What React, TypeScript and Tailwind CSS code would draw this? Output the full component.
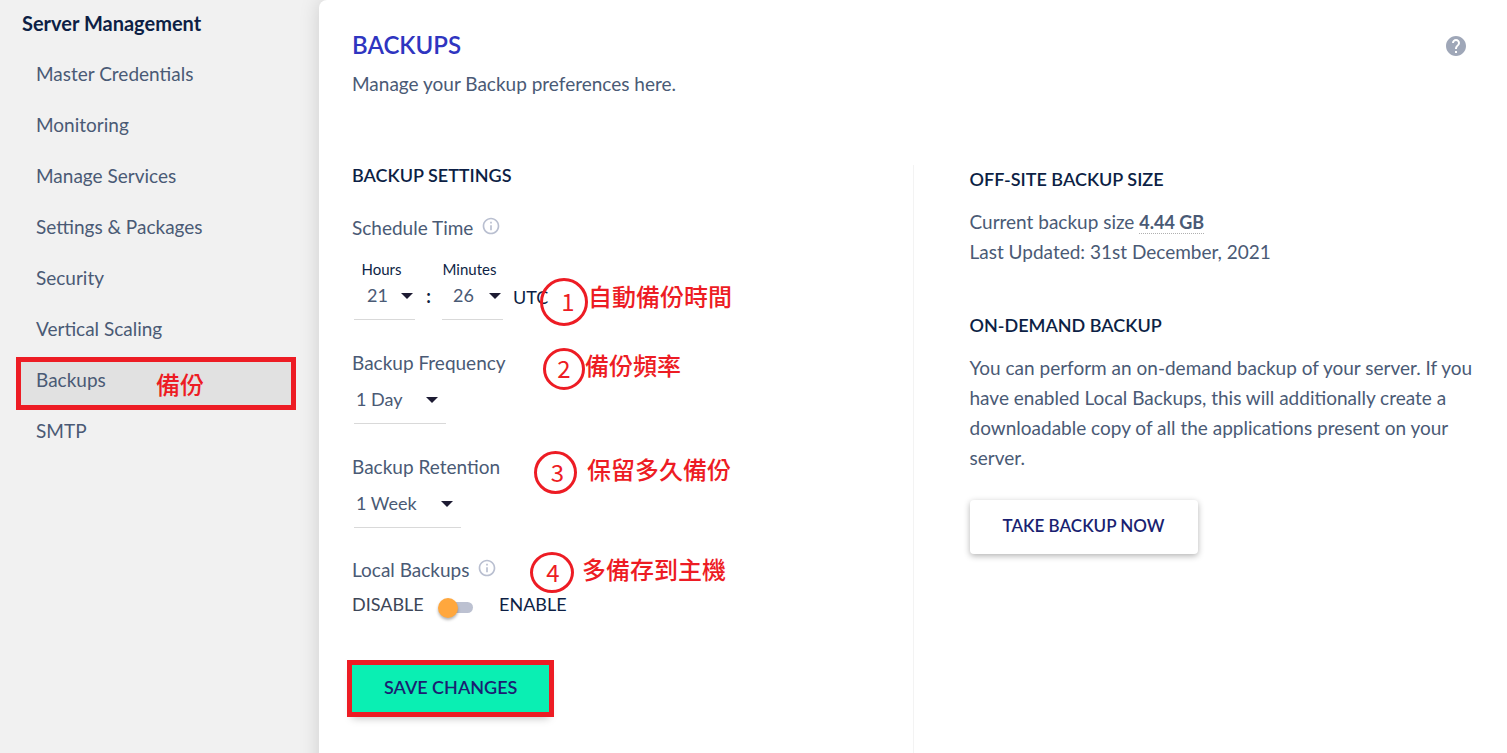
import { useState, type ReactNode } from 'react';
import { MdHelp, MdInfoOutline } from 'react-icons/md';

const navItems = [
  'Master Credentials',
  'Monitoring',
  'Manage Services',
  'Settings & Packages',
  'Security',
  'Vertical Scaling',
  'Backups',
  'SMTP',
];

const range = (n: number) => Array.from({ length: n }, (_, i) => String(i).padStart(2, '0'));

interface SelectBoxProps {
  id: string;
  options: string[];
  initial: string;
  className: string;
  arrowClassName: string;
}

const SelectBox = ({ id, options, initial, className, arrowClassName }: SelectBoxProps) => {
  const [value, setValue] = useState(initial);

  return (
    <div className="relative w-fit">
      <select
        id={id}
        value={value}
        onChange={(e) => setValue(e.target.value)}
        className={`block h-[41px] appearance-none border-b border-[#d9d9d9] bg-transparent pb-2 text-lg text-[#4a5a75] outline-none ${className}`}
      >
        {options.map((option) => (
          <option key={option}>{option}</option>
        ))}
      </select>
      <svg
        viewBox="0 0 12 6"
        className={`pointer-events-none absolute top-[14px] h-[6px] w-3 ${arrowClassName}`}
        fill="#1d1b33"
      >
        <path d="M0 0h12L6 6z" />
      </svg>
    </div>
  );
};

interface NoteProps {
  digit: string;
  text: string;
  className: string;
  circleClassName: string;
  textClassName: string;
}

// red hand-drawn style marker placed over the form
const Note = ({ digit, text, className, circleClassName, textClassName }: NoteProps) => (
  <div
    className={`pointer-events-none absolute flex items-center whitespace-nowrap font-['Noto_Sans_CJK_TC',sans-serif] text-2xl text-[#ed1c24] ${className}`}
  >
    <span
      className={`flex items-center justify-center rounded-[50%] border-3 border-[#ed1c24] pb-[2px] ${circleClassName}`}
    >
      {digit}
    </span>
    <span className={`font-medium ${textClassName}`}>{text}</span>
  </div>
);

const SectionTitle = ({ children }: { children: ReactNode }) => (
  <h2 className="text-lg leading-5 font-semibold text-[#0d1f45]">{children}</h2>
);

const InfoLabel = ({ children }: { children: ReactNode }) => (
  <div className="flex items-start gap-2 leading-6">
    {children}
    <MdInfoOutline className="size-5 text-[#b9bfd0]" />
  </div>
);

const Sidebar = () => (
  <aside className="w-[319px] shrink-0">
    <h2 className="pt-[7px] pl-[22px] text-xl leading-8 font-bold text-[#0d1f45]">
      Server Management
    </h2>
    <nav className="mt-[10px]">
      <ul>
        {navItems.map((item) => (
          <li key={item} className="relative">
            {item === 'Backups' && (
              <div className="absolute top-[2px] right-[23px] left-4 h-[53px] border-5 border-[#ed1c24] bg-[#e1e1e1]">
                <span className="absolute top-1 left-[135px] font-['Noto_Sans_CJK_TC',sans-serif] text-2xl leading-9 font-medium text-[#ed1c24]">
                  備份
                </span>
              </div>
            )}
            <a href="#" className="relative flex h-[51px] items-center pl-9">
              {item}
            </a>
          </li>
        ))}
      </ul>
    </nav>
  </aside>
);

const BackupSettings = () => {
  const [local, setLocal] = useState(false);

  return (
    <section>
      <SectionTitle>BACKUP SETTINGS</SectionTitle>

      <div className="relative mt-[31px]">
        <InfoLabel>Schedule Time</InfoLabel>
        <div className="mt-[19px] ml-[2px] flex text-lg text-[#0d1f45]">
          <div>
            <label htmlFor="hours" className="block pr-[6px] text-center text-[15px] leading-5">
              Hours
            </label>
            <SelectBox
              id="hours"
              options={range(24)}
              initial="21"
              className="w-[61px] pl-[13px]"
              arrowClassName="right-[2px]"
            />
          </div>
          <span className="w-[27px] pt-[25px] text-center leading-6 font-bold">:</span>
          <div>
            <label htmlFor="minutes" className="block pr-[6px] text-center text-[15px] leading-5">
              Minutes
            </label>
            <SelectBox
              id="minutes"
              options={range(60)}
              initial="26"
              className="w-[61px] pl-[11px]"
              arrowClassName="right-[2px]"
            />
          </div>
          <span className="pt-[26px] pl-[10px] leading-6">UTC</span>
        </div>
        <Note
          digit="1"
          text="自動備份時間"
          className="top-[62px] left-[188px]"
          circleClassName="h-12 w-12 pl-2"
          textClassName="-mt-3"
        />
      </div>

      <div className="relative mt-[31px]">
        <label htmlFor="frequency" className="block leading-6">
          Backup Frequency
        </label>
        <div className="mt-2 ml-[2px]">
          <SelectBox
            id="frequency"
            options={['1 Hour', '3 Hours', '6 Hours', '12 Hours', '1 Day', '7 Days']}
            initial="1 Day"
            className="w-[92px] pl-[2px]"
            arrowClassName="right-[8px]"
          />
        </div>
        <Note
          digit="2"
          text="備份頻率"
          className="-top-[3px] left-[191px]"
          circleClassName="h-[42px] w-[42px]"
          textClassName="-mt-2"
        />
      </div>

      <div className="relative mt-[31px]">
        <label htmlFor="retention" className="block leading-6">
          Backup Retention
        </label>
        <div className="mt-2 ml-[2px]">
          <SelectBox
            id="retention"
            options={['1 Week', '2 Weeks', '3 Weeks', '4 Weeks']}
            initial="1 Week"
            className="w-[107px] pl-[2px]"
            arrowClassName="right-[8px]"
          />
        </div>
        <Note
          digit="3"
          text="保留多久備份"
          className="-top-1 left-[182px]"
          circleClassName="h-[43px] w-[43px] pl-1"
          textClassName="ml-[10px] -mt-2"
        />
      </div>

      <div className="relative mt-[30px]">
        <InfoLabel>Local Backups</InfoLabel>
        <div className="mt-[10px] flex items-center text-lg leading-6">
          <span className="w-[88px] text-[#3d4657]">DISABLE</span>
          <input
            id="local"
            type="checkbox"
            role="switch"
            checked={local}
            onChange={(e) => setLocal(e.target.checked)}
            className="relative mt-[6px] h-[11px] w-[33px] appearance-none rounded-full bg-[#bcc1d1] before:absolute before:-top-1 before:-left-[2px] before:size-5 before:rounded-full before:bg-[#ffa73d] before:shadow-[0_2px_3px_rgba(0,0,0,0.3)] checked:before:left-4"
          />
          <label htmlFor="local" className="pl-[26px] text-[#0d1f45]">
            ENABLE
          </label>
        </div>
        <Note
          digit="4"
          text="多備存到主機"
          className="-top-[6px] left-[178px]"
          circleClassName="h-[41px] w-11 pl-[2px]"
          textClassName="ml-2 -mt-2"
        />
      </div>

      <button
        type="button"
        className="mt-[49px] h-[47px] bg-[#0aefb3] px-8 pb-1 text-lg font-semibold text-[#1a1f71] shadow-[0_6px_8px_rgba(0,0,0,0.25)] outline-5 outline-[#ed1c24]"
      >
        SAVE CHANGES
      </button>
    </section>
  );
};

const BackupInfo = () => (
  <section className="border-l border-[#f3f3f3] pt-1 pl-14">
    <SectionTitle>OFF-SITE BACKUP SIZE</SectionTitle>
    <p className="mt-[18px] leading-[30px]">
      Current backup size{' '}
      <strong className="border-b border-dotted border-[#b0b0b0] text-lg font-bold">4.44 GB</strong>
      <br />
      Last Updated: 31st December, 2021
    </p>

    <div className="mt-12">
      <SectionTitle>ON-DEMAND BACKUP</SectionTitle>
    </div>
    <p className="mt-[18px] leading-[30px]">
      You can perform an on-demand backup of your server. If you have enabled Local Backups, this will
      additionally create a downloadable copy of all the applications present on your server.
    </p>
    <button
      type="button"
      className="mt-[27px] h-[54px] rounded bg-white px-[33px] pb-[2px] text-[17px] font-semibold text-[#1a1f71] shadow-[0_2px_6px_rgba(0,0,0,0.3)]"
    >
      TAKE BACKUP NOW
    </button>
  </section>
);

export default function App() {
  return (
    <div className="flex min-h-screen bg-[#f1f1f1] font-['Lato',sans-serif] text-[19px] text-[#4a5a75]">
      <Sidebar />
      <main className="flex-1 rounded-tl-lg bg-white pt-[29px] pr-[34px] pb-9 pl-[33px] shadow-[0_0_20px_rgba(0,0,0,0.15)]">
        <header className="flex items-start justify-between">
          <div>
            <h1 className="text-2xl leading-8 font-semibold text-[#2f35c0]">BACKUPS</h1>
            <p className="mt-2 leading-[30px]">Manage your Backup preferences here.</p>
          </div>
          <button type="button" aria-label="Help" className="mt-[5px] mr-[5px]">
            <MdHelp className="size-6 text-[#9fa7b8]" />
          </button>
        </header>
        <div className="mt-[66px] grid min-h-[588px] grid-cols-2">
          <BackupSettings />
          <BackupInfo />
        </div>
      </main>
    </div>
  );
}
